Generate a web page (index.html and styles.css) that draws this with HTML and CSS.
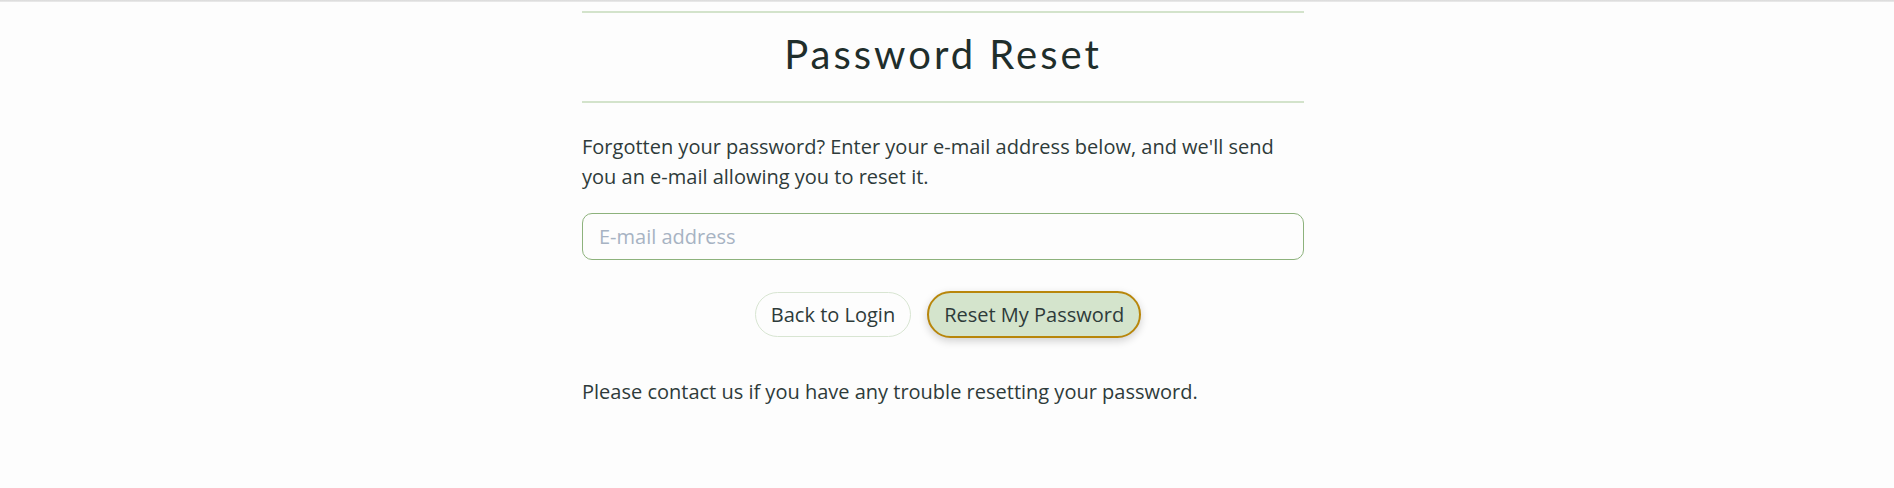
FILE: index.html
```html
<!DOCTYPE html>
<html lang="en">
<head>
<meta charset="utf-8">
<title>Password Reset</title>
<link rel="stylesheet" href="styles.css">
</head>
<body>
<div class="topbar"></div>
<main class="page">
  <section class="card">
    <h1 class="title">Password Reset</h1>
    <p class="intro">Forgotten your password? Enter your e-mail address below, and we'll send you an e-mail allowing you to reset it.</p>
    <form class="form">
      <input class="field" type="email" placeholder="E-mail address">
      <div class="actions">
        <a class="btn btn-light" href="#">Back to Login</a>
        <button class="btn btn-primary" type="button">Reset My Password</button>
      </div>
    </form>
    <p class="note">Please contact us if you have any trouble resetting your password.</p>
  </section>
</main>
</body>
</html>
```
FILE: styles.css
```css
* { box-sizing: border-box; }
html, body { margin: 0; padding: 0; }
body {
  background: #fdfdfd;
  font-family: "Open Sans", "Noto Sans", sans-serif;
  color: #2e3b3a;
  height: 488px;
  overflow: hidden;
}
.topbar {
  height: 2px;
  background: linear-gradient(#d9d9d9, #ececec);
}
.page {
  padding-right: 8px;
}
.card {
  width: 722px;
  margin: 0 auto;
  padding-top: 9px;
}
.title {
  margin: 0;
  border-top: 2px solid #d3e3cb;
  border-bottom: 2px solid #d3e3cb;
  padding: 17px 0 23px;
  font-family: Lato, "Open Sans", sans-serif;
  font-weight: 400;
  font-size: 40px;
  line-height: 48px;
  letter-spacing: 3px;
  text-align: center;
  color: #1f2e2b;
}
.intro {
  margin: 29px 0 0;
  font-size: 20px;
  line-height: 30px;
}
.form { margin: 21px 0 0; }
.field {
  display: block;
  width: 100%;
  height: 47px;
  padding: 10px 16px;
  border: 1px solid #8db27c;
  border-radius: 10px;
  background: #fdfdfd;
  font-family: "Open Sans", "Noto Sans", sans-serif;
  font-size: 20px;
  color: #2e3b3a;
  outline: none;
}
.field::placeholder { color: #a7b3c3; }
.actions {
  display: flex;
  justify-content: center;
  align-items: center;
  gap: 16px;
  margin-top: 31px;
  padding-left: 10px;
}
.btn {
  display: inline-flex;
  align-items: center;
  padding: 0 15px;
  border-radius: 24px;
  font-family: "Open Sans", "Noto Sans", sans-serif;
  font-size: 20px;
  line-height: 23px;
  color: #2e3b3a;
  text-decoration: none;
  cursor: pointer;
}
.btn-light {
  height: 45px;
  border: 1px solid #d8e5d2;
  background: #fdfdfd;
}
.btn-primary {
  height: 47px;
  border: 2px solid #b8860b;
  background: #d4e4cc;
  box-shadow: 0 3px 8px rgba(0, 0, 0, 0.18);
}
.note {
  margin: 39px 0 0;
  font-size: 20px;
  line-height: 30px;
}
```
